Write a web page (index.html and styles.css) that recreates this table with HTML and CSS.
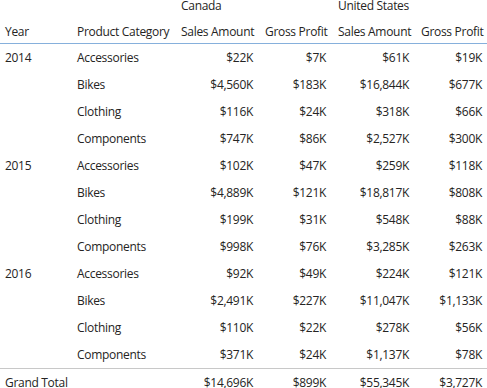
FILE: index.html
```html
<!DOCTYPE html>
<html>
<head>
<meta charset="utf-8">
<link rel="stylesheet" href="styles.css">
</head>
<body>
<table class="matrix">
  <colgroup>
    <col class="c-year"><col class="c-cat"><col class="c-sa1"><col class="c-gp1"><col class="c-sa2"><col class="c-gp2">
  </colgroup>
  <thead>
    <tr class="country-row">
      <th></th><th></th>
      <th colspan="2" class="country">Canada</th>
      <th colspan="2" class="country">United States</th>
    </tr>
    <tr class="head-row">
      <th class="txt first">Year</th>
      <th class="txt">Product Category</th>
      <th class="num">Sales Amount</th>
      <th class="num">Gross Profit</th>
      <th class="num">Sales Amount</th>
      <th class="num last">Gross Profit</th>
    </tr>
  </thead>
  <tbody>
    <tr><td class="txt first">2014</td><td class="txt">Accessories</td><td class="num">$22K</td><td class="num">$7K</td><td class="num">$61K</td><td class="num last">$19K</td></tr>
    <tr><td class="txt first"></td><td class="txt">Bikes</td><td class="num">$4,560K</td><td class="num">$183K</td><td class="num">$16,844K</td><td class="num last">$677K</td></tr>
    <tr><td class="txt first"></td><td class="txt">Clothing</td><td class="num">$116K</td><td class="num">$24K</td><td class="num">$318K</td><td class="num last">$66K</td></tr>
    <tr><td class="txt first"></td><td class="txt">Components</td><td class="num">$747K</td><td class="num">$86K</td><td class="num">$2,527K</td><td class="num last">$300K</td></tr>
    <tr><td class="txt first">2015</td><td class="txt">Accessories</td><td class="num">$102K</td><td class="num">$47K</td><td class="num">$259K</td><td class="num last">$118K</td></tr>
    <tr><td class="txt first"></td><td class="txt">Bikes</td><td class="num">$4,889K</td><td class="num">$121K</td><td class="num">$18,817K</td><td class="num last">$808K</td></tr>
    <tr><td class="txt first"></td><td class="txt">Clothing</td><td class="num">$199K</td><td class="num">$31K</td><td class="num">$548K</td><td class="num last">$88K</td></tr>
    <tr><td class="txt first"></td><td class="txt">Components</td><td class="num">$998K</td><td class="num">$76K</td><td class="num">$3,285K</td><td class="num last">$263K</td></tr>
    <tr><td class="txt first">2016</td><td class="txt">Accessories</td><td class="num">$92K</td><td class="num">$49K</td><td class="num">$224K</td><td class="num last">$121K</td></tr>
    <tr><td class="txt first"></td><td class="txt">Bikes</td><td class="num">$2,491K</td><td class="num">$227K</td><td class="num">$11,047K</td><td class="num last">$1,133K</td></tr>
    <tr><td class="txt first"></td><td class="txt">Clothing</td><td class="num">$110K</td><td class="num">$22K</td><td class="num">$278K</td><td class="num last">$56K</td></tr>
    <tr><td class="txt first"></td><td class="txt">Components</td><td class="num">$371K</td><td class="num">$24K</td><td class="num">$1,137K</td><td class="num last">$78K</td></tr>
  </tbody>
  <tfoot>
    <tr class="total-row">
      <td class="txt first">Grand Total</td><td class="txt"></td><td class="num">$14,696K</td><td class="num">$899K</td><td class="num">$55,345K</td><td class="num last">$3,727K</td>
    </tr>
  </tfoot>
</table>
</body>
</html>
```

FILE: styles.css
```css
html, body {
  margin: 0;
  padding: 0;
  background: #ffffff;
}

body {
  font-family: "Open Sans", "Noto Sans", sans-serif;
  font-size: 12px;
  color: #252423;
  overflow: hidden;
}

.matrix {
  width: 487px;
  table-layout: fixed;
  border-collapse: collapse;
  border-spacing: 0;
  margin-top: -2px;
  letter-spacing: -0.3px;
}

.c-year { width: 71px; }
.c-cat { width: 104px; }
.c-sa1 { width: 84px; }
.c-gp1 { width: 73px; }
.c-sa2 { width: 83px; }
.c-gp2 { width: 72px; }

.matrix th,
.matrix td {
  font-weight: normal;
  line-height: 16px;
  padding: 0 6px;
  white-space: nowrap;
  vertical-align: top;
}

.matrix .txt { text-align: left; }
.matrix .num { text-align: right; }
.matrix .first { padding-left: 5px; }
.matrix .last { padding-right: 5px; }

.country-row th {
  height: 16px;
  text-align: left;
  padding-bottom: 10px;
}

.head-row th {
  padding-top: 0;
  padding-bottom: 3px;
  border-bottom: 1px solid #86b0dc;
}

.matrix tbody td {
  height: 16px;
  padding-top: 6px;
  padding-bottom: 5px;
}

.total-row td {
  border-top: 1px solid #c8c8c8;
  padding-top: 6px;
  padding-bottom: 5px;
}
```
